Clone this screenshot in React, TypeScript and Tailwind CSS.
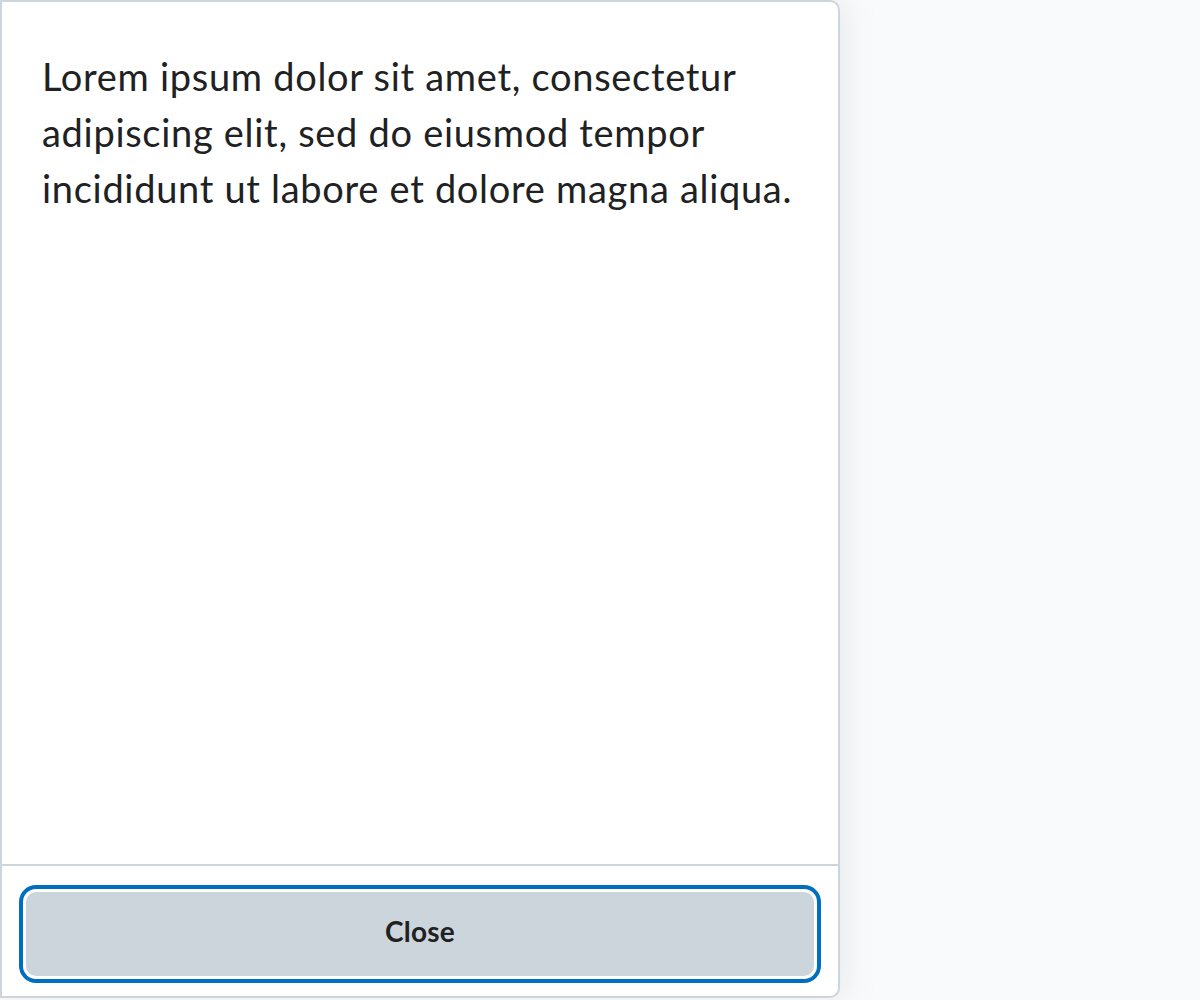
export default function App() {
  return (
    <div className="h-[1000px] w-[1200px] overflow-hidden bg-[#f9fafb] font-['Lato',sans-serif]">
      <div className="flex h-[998px] w-[840px] flex-col rounded-r-[10px] border-2 border-[#cdd5dc] bg-white shadow-[8px_0_24px_rgba(205,213,220,0.35)]">
        {/* Body */}
        <div className="flex-1 px-[40px] pt-[46px]">
          <p className="text-[38px] leading-[56px] tracking-[0.7px] text-[#202122]">
            Lorem ipsum dolor sit amet, consectetur adipiscing elit, sed do eiusmod tempor incididunt ut labore et dolore magna aliqua.
          </p>
        </div>

        {/* Footer */}
        <div className="border-t-2 border-[#cdd5dc] px-[24px] pb-[20px] pt-[26px]">
          <button className="h-[84px] w-full rounded-[10px] bg-[#cdd5dc] pb-[6px] text-[28px] font-bold tracking-[0.2px] text-[#202122] ring-[4px] ring-[#006fbf] ring-offset-[3px] ring-offset-white">
            Close
          </button>
        </div>
      </div>
    </div>
  );
}
